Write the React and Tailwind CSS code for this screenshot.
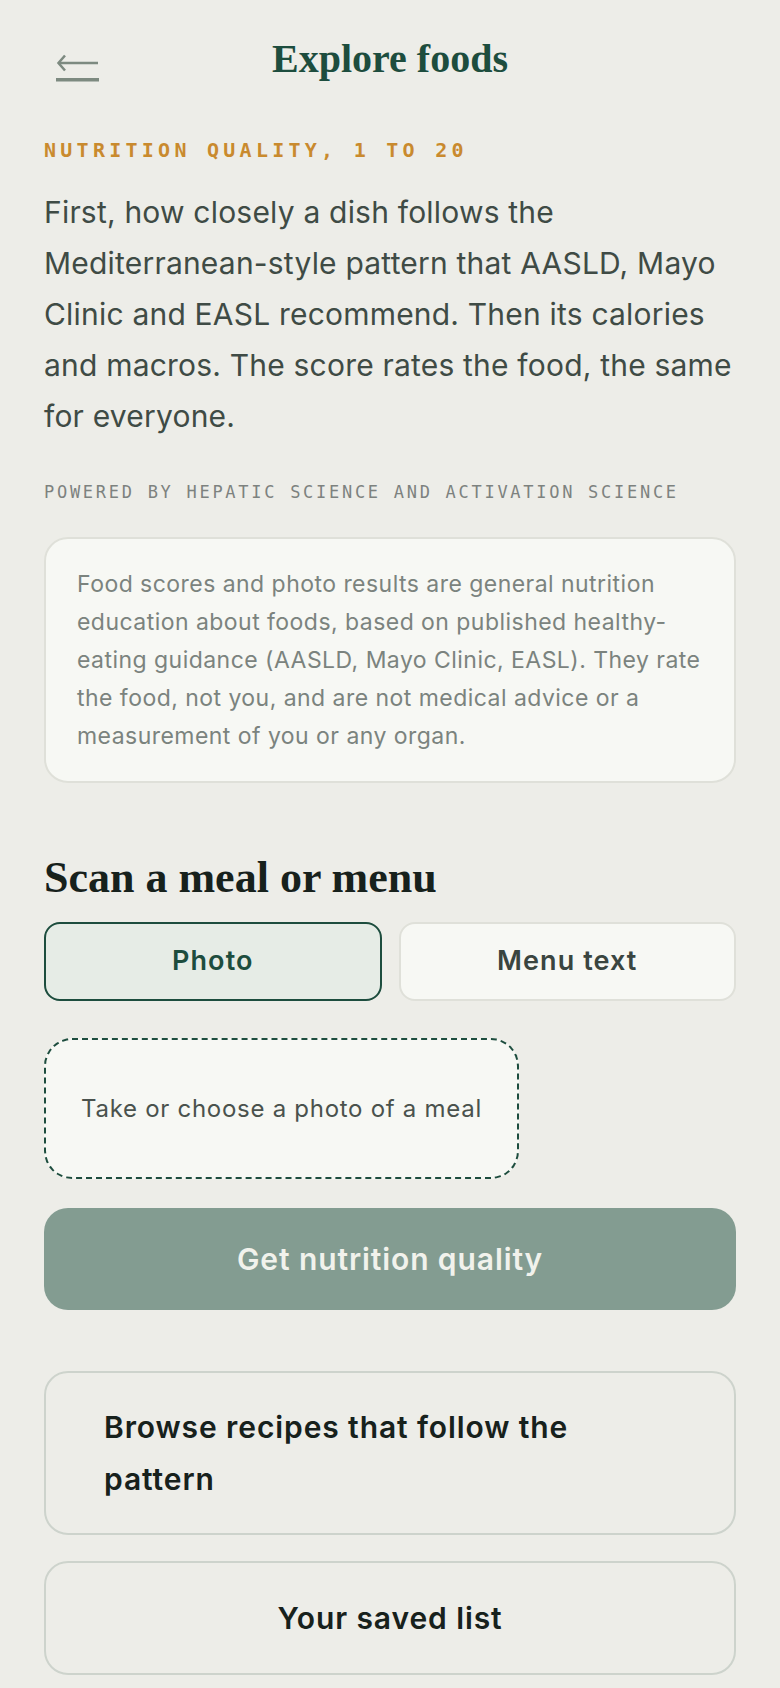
import React, { useState } from 'react';

const serif = "font-['Liberation_Serif',serif]";
const sans = "font-['Inter',sans-serif]";
const mono = "font-['DejaVu_Sans_Mono',monospace]";

function BackArrow() {
  return (
    <svg width="44" height="28" viewBox="0 0 44 28" fill="none">
      <path d="M3 9 H42" stroke="#7d8a80" strokeWidth="2.5" />
      <path d="M9 1.5 L2.5 9 L9 16.5" stroke="#7d8a80" strokeWidth="2.5" strokeLinejoin="miter" />
      <rect x="0" y="24" width="43" height="3.5" fill="#7d8a80" />
    </svg>
  );
}

export default function App() {
  const [mode, setMode] = useState('photo');

  return (
    <div className={`min-h-screen bg-[#edede8] px-[44px] pb-4 ${sans}`}>
      <header className="grid grid-cols-[1fr_auto_1fr] items-start pt-[35px]">
        <button className="mt-[19px] ml-[12px] justify-self-start">
          <BackArrow />
        </button>
        <h1 className={`${serif} text-[40px] leading-[48px] font-bold text-[#1d4d3e]`}>Explore foods</h1>
        <div />
      </header>

      <p className={`${mono} mt-[55px] text-[20px] leading-[24px] font-bold tracking-[0.213em] text-[#c98a2e]`}>
        NUTRITION QUALITY, 1 TO 20
      </p>

      <p className="mt-[25px] text-[30px] leading-[51px] tracking-[0.2px] text-[#3f4b45]">
        First, how closely a dish follows the Mediterranean-style pattern that AASLD, Mayo Clinic and EASL
        recommend. Then its calories and macros. The score rates the food, the same for everyone.
      </p>

      <p className={`${mono} mt-[40px] text-[17px] leading-[20px] tracking-[0.16em] text-[#7d827f]`}>
        POWERED BY HEPATIC SCIENCE AND ACTIVATION SCIENCE
      </p>

      <div className="mt-[35px] rounded-[24px] border-2 border-[#dfe0d9] bg-[#f7f8f4] px-[31px] py-[26px]">
        <p className="text-[23px] leading-[38px] tracking-[0.02em] text-[#7b837e]">
          Food scores and photo results are general nutrition education about foods, based on published
          healthy-eating guidance (AASLD, Mayo Clinic, EASL). They rate the food, not you, and are not medical
          advice or a measurement of you or any organ.
        </p>
      </div>

      <h2 className={`${serif} mt-[68px] text-[44px] leading-[53px] font-bold text-[#17211c]`}>
        Scan a meal or menu
      </h2>

      <div className="mt-[18px] grid grid-cols-2 gap-[17px]">
        <button
          onClick={() => setMode('photo')}
          className={`h-[79px] rounded-[16px] border-2 text-[27px] font-semibold tracking-[0.04em] ${
            mode === 'photo'
              ? 'border-[#1d4d3e] bg-[#e6ece6] text-[#1d4d3e]'
              : 'border-[#dfe0d9] bg-[#f7f8f4] text-[#3a4540]'
          }`}
        >
          Photo
        </button>
        <button
          onClick={() => setMode('menu')}
          className={`h-[79px] rounded-[16px] border-2 text-[27px] font-semibold tracking-[0.04em] ${
            mode === 'menu'
              ? 'border-[#1d4d3e] bg-[#e6ece6] text-[#1d4d3e]'
              : 'border-[#dfe0d9] bg-[#f7f8f4] text-[#3a4540]'
          }`}
        >
          Menu text
        </button>
      </div>

      <div className="mt-[37px]">
        <label className="inline-flex h-[141px] items-center rounded-[28px] border-2 border-dashed border-[#1d4d3e] bg-[#f7f8f4] px-[35px] text-[24px] tracking-[0.03em] text-[#4a524d]">
          Take or choose a photo of a meal
        </label>
      </div>

      <button className="mt-[29px] flex h-[102px] w-full items-center justify-center rounded-[24px] bg-[#839c91] text-[30px] font-semibold tracking-[0.03em] text-[#f1f2ec]">
        Get nutrition quality
      </button>

      <div className="mt-[61px] flex flex-col gap-[26px]">
        <button className="rounded-[24px] border-2 border-[#cdd3cc] px-[58px] py-[28px] text-left text-[30px] leading-[52px] font-semibold tracking-[0.03em] text-[#17211c]">
          Browse recipes that follow the pattern
        </button>
        <button className="flex h-[114px] items-center justify-center rounded-[24px] border-2 border-[#cdd3cc] text-[30px] font-semibold tracking-[0.03em] text-[#17211c]">
          Your saved list
        </button>
      </div>
    </div>
  );
}
